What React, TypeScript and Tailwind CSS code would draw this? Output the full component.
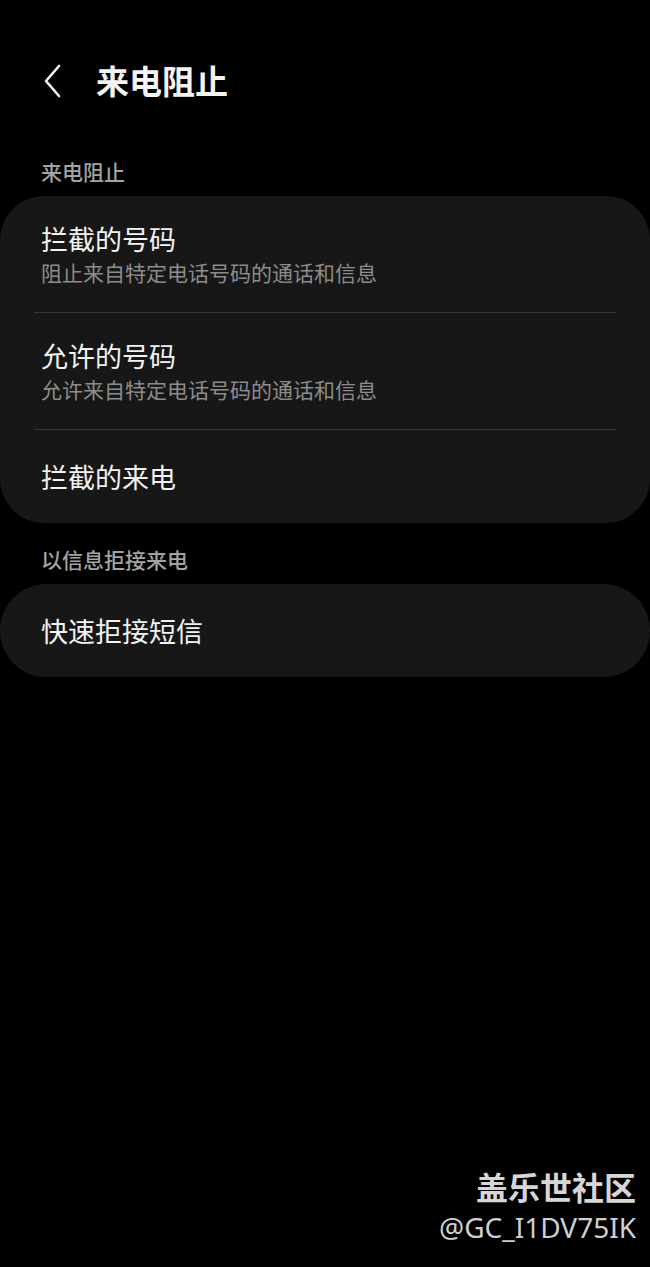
import React from 'react';

const font = { fontFamily: '"Noto Sans CJK SC", "Noto Sans", sans-serif' };

const BackIcon: React.FC = () => (
  <svg width="22" height="34" viewBox="0 0 22 34" fill="none" stroke="#f2f2f2" strokeWidth={2.6} strokeLinecap="round" strokeLinejoin="round">
    <path d="M17 2 L4 17 L17 32" />
  </svg>
);

type Item = { title: string; sub?: string };

const Row: React.FC<{ item: Item; last?: boolean }> = ({ item, last }) => (
  <div>
    <div className={`px-[41px] flex flex-col justify-center ${item.sub ? 'h-[116px]' : 'h-[93px]'}`}>
      <div className="text-[27px] leading-[34px] text-[#f2f2f2]">{item.title}</div>
      {item.sub && <div className="text-[21px] leading-[28px] text-[#8c8c8c] mt-[2px]">{item.sub}</div>}
    </div>
    {!last && <div className="mx-[34px] h-px bg-[#363636]" />}
  </div>
);

const App: React.FC = () => {
  const blocking: Item[] = [
    { title: '拦截的号码', sub: '阻止来自特定电话号码的通话和信息' },
    { title: '允许的号码', sub: '允许来自特定电话号码的通话和信息' },
    { title: '拦截的来电' },
  ];

  return (
    <div className="w-[650px] h-[1267px] bg-black flex flex-col" style={font}>
      <div className="h-[162px] flex flex-col">
        <div className="flex items-center h-[64px] mt-[49px] pl-[42px]">
          <BackIcon />
          <span className="ml-[32px] text-[33px] font-bold text-[#f4f4f4]">来电阻止</span>
        </div>
      </div>

      <div className="px-[41px] text-[21px] leading-[21px] font-medium text-[#a3a3a3] -mt-[1px]">来电阻止</div>
      <div className="mt-[14px] bg-[#171717] rounded-[44px]">
        {blocking.map((it, i) => (
          <Row key={it.title} item={it} last={i === blocking.length - 1} />
        ))}
      </div>

      <div className="px-[41px] mt-[26px] text-[21px] leading-[21px] font-medium text-[#a3a3a3]">以信息拒接来电</div>
      <div className="mt-[14px] bg-[#171717] rounded-[47px]">
        <Row item={{ title: '快速拒接短信' }} last />
      </div>

      <div className="flex-1" />
      <div className="flex flex-col items-end pr-[14px] pb-[22px]">
        <div className="text-[32px] leading-[38px] font-bold text-[#d6d6d6]">盖乐世社区</div>
        <div className="text-[28px] leading-[36px] text-[#cfcfcf] mt-[4px]" style={{ fontFamily: '"Noto Sans", sans-serif' }}>@GC_I1DV75IK</div>
      </div>
    </div>
  );
};

export default App;
